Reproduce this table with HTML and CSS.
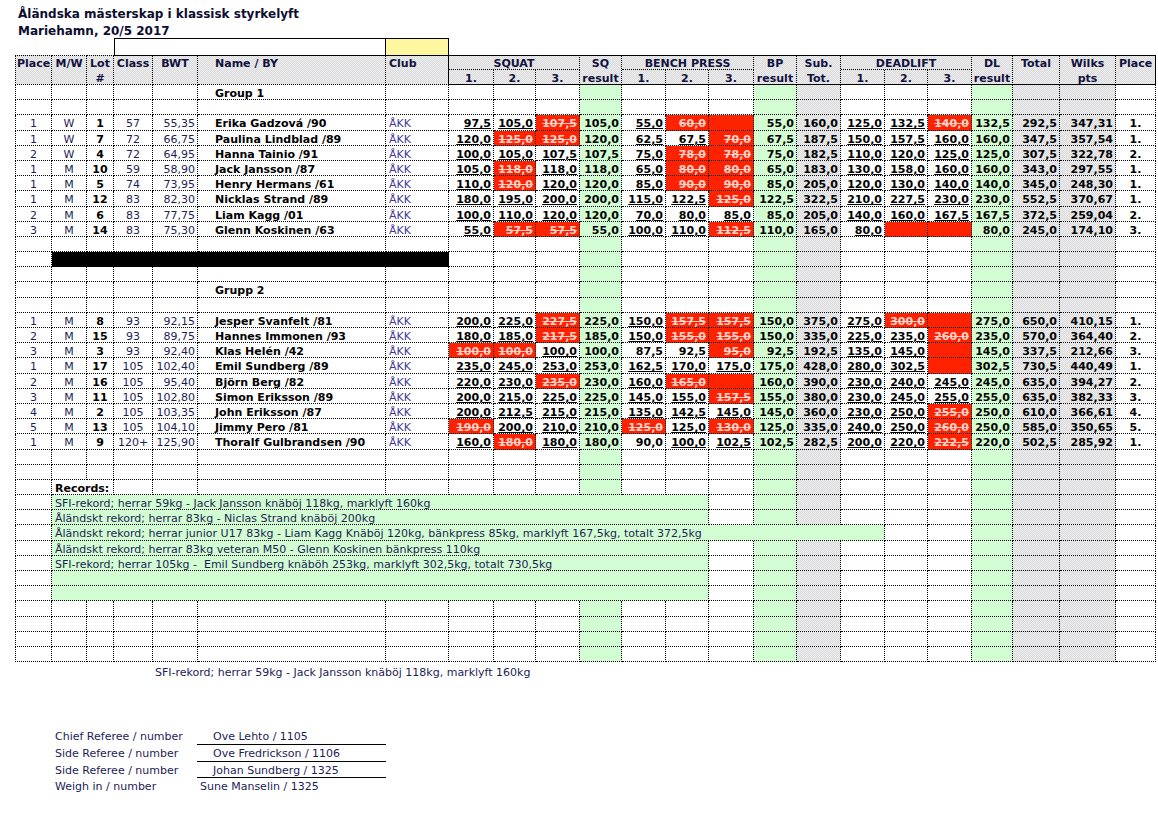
FILE: index.html
```html
<!DOCTYPE html>
<html lang="sv">
<head>
<meta charset="utf-8">
<title>Åländska mästerskap i klassisk styrkelyft</title>
<link rel="stylesheet" href="styles.css">
</head>
<body>
<div class="title">Åländska mästerskap i klassisk styrkelyft<br>Mariehamn, 20/5 2017</div>
<div class="sheet">
  <div class="boxrow"><div class="sp"></div><div class="box"></div><div class="yel"></div></div>
  <div class="head">
    <div class="h2 lf dt first">Place</div>
    <div class="h2 lf dt">M/W</div>
    <div class="h2 lf dt">Lot<br>#</div>
    <div class="h2 lf">Class</div>
    <div class="h2 lf">BWT</div>
    <div class="h2 lf nm">Name / BY</div>
    <div class="h2 lf club">Club</div>
    <div class="h3">SQUAT</div>
    <div class="h2">SQ<br>result</div>
    <div class="h3">BENCH PRESS</div>
    <div class="h2">BP<br>result</div>
    <div class="h2">Sub.<br>Tot.</div>
    <div class="h3">DEADLIFT</div>
    <div class="h2">DL<br>result</div>
    <div class="h2">Total</div>
    <div class="h2">Wilks<br>pts</div>
    <div class="h2 end">Place</div>
    <div class="h1">1.</div><div class="h1">2.</div><div class="h1">3.</div>
    <div class="h1">1.</div><div class="h1">2.</div><div class="h1">3.</div>
    <div class="h1">1.</div><div class="h1">2.</div><div class="h1">3.</div>
  </div>

  <div class="row r"><span></span><span></span><span></span><span></span><span></span><span>Group 1</span><span></span><span></span><span></span><span></span><span></span><span></span><span></span><span></span><span></span><span></span><span></span><span></span><span></span><span></span><span></span><span></span><span></span></div>
  <div class="row r"><span></span><span></span><span></span><span></span><span></span><span></span><span></span><span></span><span></span><span></span><span></span><span></span><span></span><span></span><span></span><span></span><span></span><span></span><span></span><span></span><span></span><span></span><span></span></div>

  <div class="row r"><span>1</span><span>W</span><span>1</span><span>57</span><span>55,35</span><span>Erika Gadzová /90</span><span>ÅKK</span><span class="u">97,5</span><span class="u">105,0</span><span class="x">107,5</span><span>105,0</span><span class="u">55,0</span><span class="x">60,0</span><span class="x"></span><span>55,0</span><span>160,0</span><span class="u">125,0</span><span class="u">132,5</span><span class="x">140,0</span><span>132,5</span><span>292,5</span><span>347,31</span><span>1.</span></div>
  <div class="row r"><span>1</span><span>W</span><span>7</span><span>72</span><span>66,75</span><span>Paulina Lindblad /89</span><span>ÅKK</span><span class="u">120,0</span><span class="x">125,0</span><span class="x">125,0</span><span>120,0</span><span class="u">62,5</span><span class="u">67,5</span><span class="x">70,0</span><span>67,5</span><span>187,5</span><span class="u">150,0</span><span class="u">157,5</span><span class="u">160,0</span><span>160,0</span><span>347,5</span><span>357,54</span><span>1.</span></div>
  <div class="row r"><span>2</span><span>W</span><span>4</span><span>72</span><span>64,95</span><span>Hanna Tainio /91</span><span>ÅKK</span><span class="u">100,0</span><span class="u">105,0</span><span class="u">107,5</span><span>107,5</span><span class="u">75,0</span><span class="x">78,0</span><span class="x">78,0</span><span>75,0</span><span>182,5</span><span class="u">110,0</span><span class="u">120,0</span><span class="u">125,0</span><span>125,0</span><span>307,5</span><span>322,78</span><span>2.</span></div>
  <div class="row r"><span>1</span><span>M</span><span>10</span><span>59</span><span>58,90</span><span>Jack Jansson /87</span><span>ÅKK</span><span class="u">105,0</span><span class="x">118,0</span><span class="u">118,0</span><span>118,0</span><span class="u">65,0</span><span class="x">80,0</span><span class="x">80,0</span><span>65,0</span><span>183,0</span><span class="u">130,0</span><span class="u">158,0</span><span class="u">160,0</span><span>160,0</span><span>343,0</span><span>297,55</span><span>1.</span></div>
  <div class="row r"><span>1</span><span>M</span><span>5</span><span>74</span><span>73,95</span><span>Henry Hermans /61</span><span>ÅKK</span><span class="u">110,0</span><span class="x">120,0</span><span class="u">120,0</span><span>120,0</span><span class="u">85,0</span><span class="x">90,0</span><span class="x">90,0</span><span>85,0</span><span>205,0</span><span class="u">120,0</span><span class="u">130,0</span><span class="u">140,0</span><span>140,0</span><span>345,0</span><span>248,30</span><span>1.</span></div>
  <div class="row r"><span>1</span><span>M</span><span>12</span><span>83</span><span>82,30</span><span>Nicklas Strand /89</span><span>ÅKK</span><span class="u">180,0</span><span class="u">195,0</span><span class="u">200,0</span><span>200,0</span><span class="u">115,0</span><span class="u">122,5</span><span class="x">125,0</span><span>122,5</span><span>322,5</span><span class="u">210,0</span><span class="u">227,5</span><span class="u">230,0</span><span>230,0</span><span>552,5</span><span>370,67</span><span>1.</span></div>
  <div class="row r"><span>2</span><span>M</span><span>6</span><span>83</span><span>77,75</span><span>Liam Kagg /01</span><span>ÅKK</span><span class="u">100,0</span><span class="u">110,0</span><span class="u">120,0</span><span>120,0</span><span class="u">70,0</span><span class="u">80,0</span><span class="u">85,0</span><span>85,0</span><span>205,0</span><span class="u">140,0</span><span class="u">160,0</span><span class="u">167,5</span><span>167,5</span><span>372,5</span><span>259,04</span><span>2.</span></div>
  <div class="row r"><span>3</span><span>M</span><span>14</span><span>83</span><span>75,30</span><span>Glenn Koskinen /63</span><span>ÅKK</span><span class="u">55,0</span><span class="x">57,5</span><span class="x">57,5</span><span>55,0</span><span class="u">100,0</span><span class="u">110,0</span><span class="x">112,5</span><span>110,0</span><span>165,0</span><span class="u">80,0</span><span class="x"></span><span class="x"></span><span>80,0</span><span>245,0</span><span>174,10</span><span>3.</span></div>

  <div class="row r"><span></span><span></span><span></span><span></span><span></span><span></span><span></span><span></span><span></span><span></span><span></span><span></span><span></span><span></span><span></span><span></span><span></span><span></span><span></span><span></span><span></span><span></span><span></span></div>
  <div class="row"><span></span><span class="blk"></span><span></span><span></span><span></span><span class="g"></span><span></span><span></span><span></span><span class="g"></span><span class="k"></span><span></span><span></span><span></span><span class="g"></span><span class="k"></span><span class="k"></span><span></span></div>
  <div class="row r"><span></span><span></span><span></span><span></span><span></span><span></span><span></span><span></span><span></span><span></span><span></span><span></span><span></span><span></span><span></span><span></span><span></span><span></span><span></span><span></span><span></span><span></span><span></span></div>
  <div class="row r"><span></span><span></span><span></span><span></span><span></span><span>Grupp 2</span><span></span><span></span><span></span><span></span><span></span><span></span><span></span><span></span><span></span><span></span><span></span><span></span><span></span><span></span><span></span><span></span><span></span></div>
  <div class="row r"><span></span><span></span><span></span><span></span><span></span><span></span><span></span><span></span><span></span><span></span><span></span><span></span><span></span><span></span><span></span><span></span><span></span><span></span><span></span><span></span><span></span><span></span><span></span></div>

  <div class="row r"><span>1</span><span>M</span><span>8</span><span>93</span><span>92,15</span><span>Jesper Svanfelt /81</span><span>ÅKK</span><span class="u">200,0</span><span class="u">225,0</span><span class="x">227,5</span><span>225,0</span><span class="u">150,0</span><span class="x">157,5</span><span class="x">157,5</span><span>150,0</span><span>375,0</span><span class="u">275,0</span><span class="x">300,0</span><span class="x"></span><span>275,0</span><span>650,0</span><span>410,15</span><span>1.</span></div>
  <div class="row r"><span>2</span><span>M</span><span>15</span><span>93</span><span>89,75</span><span>Hannes Immonen /93</span><span>ÅKK</span><span class="u">180,0</span><span class="u">185,0</span><span class="x">217,5</span><span>185,0</span><span class="u">150,0</span><span class="x">155,0</span><span class="x">155,0</span><span>150,0</span><span>335,0</span><span class="u">225,0</span><span class="u">235,0</span><span class="x">260,0</span><span>235,0</span><span>570,0</span><span>364,40</span><span>2.</span></div>
  <div class="row r"><span>3</span><span>M</span><span>3</span><span>93</span><span>92,40</span><span>Klas Helén /42</span><span>ÅKK</span><span class="x">100,0</span><span class="x">100,0</span><span class="u">100,0</span><span>100,0</span><span>87,5</span><span>92,5</span><span class="x">95,0</span><span>92,5</span><span>192,5</span><span class="u">135,0</span><span class="u">145,0</span><span class="x"></span><span>145,0</span><span>337,5</span><span>212,66</span><span>3.</span></div>
  <div class="row r"><span>1</span><span>M</span><span>17</span><span>105</span><span>102,40</span><span>Emil Sundberg /89</span><span>ÅKK</span><span class="u">235,0</span><span class="u">245,0</span><span class="u">253,0</span><span>253,0</span><span class="u">162,5</span><span class="u">170,0</span><span class="u">175,0</span><span>175,0</span><span>428,0</span><span class="u">280,0</span><span class="u">302,5</span><span class="x"></span><span>302,5</span><span>730,5</span><span>440,49</span><span>1.</span></div>
  <div class="row r"><span>2</span><span>M</span><span>16</span><span>105</span><span>95,40</span><span>Björn Berg /82</span><span>ÅKK</span><span class="u">220,0</span><span class="u">230,0</span><span class="x">235,0</span><span>230,0</span><span class="u">160,0</span><span class="x">165,0</span><span class="x"></span><span>160,0</span><span>390,0</span><span class="u">230,0</span><span class="u">240,0</span><span class="u">245,0</span><span>245,0</span><span>635,0</span><span>394,27</span><span>2.</span></div>
  <div class="row r"><span>3</span><span>M</span><span>11</span><span>105</span><span>102,80</span><span>Simon Eriksson /89</span><span>ÅKK</span><span class="u">200,0</span><span class="u">215,0</span><span class="u">225,0</span><span>225,0</span><span class="u">145,0</span><span class="u">155,0</span><span class="x">157,5</span><span>155,0</span><span>380,0</span><span class="u">230,0</span><span class="u">245,0</span><span class="u">255,0</span><span>255,0</span><span>635,0</span><span>382,33</span><span>3.</span></div>
  <div class="row r"><span>4</span><span>M</span><span>2</span><span>105</span><span>103,35</span><span>John Eriksson /87</span><span>ÅKK</span><span class="u">200,0</span><span class="u">212,5</span><span class="u">215,0</span><span>215,0</span><span class="u">135,0</span><span class="u">142,5</span><span class="u">145,0</span><span>145,0</span><span>360,0</span><span class="u">230,0</span><span class="u">250,0</span><span class="x">255,0</span><span>250,0</span><span>610,0</span><span>366,61</span><span>4.</span></div>
  <div class="row r"><span>5</span><span>M</span><span>13</span><span>105</span><span>104,10</span><span>Jimmy Pero /81</span><span>ÅKK</span><span class="x">190,0</span><span class="u">200,0</span><span class="u">210,0</span><span>210,0</span><span class="x">125,0</span><span class="u">125,0</span><span class="x">130,0</span><span>125,0</span><span>335,0</span><span class="u">240,0</span><span class="u">250,0</span><span class="x">260,0</span><span>250,0</span><span>585,0</span><span>350,65</span><span>5.</span></div>
  <div class="row r"><span>1</span><span>M</span><span>9</span><span>120+</span><span>125,90</span><span>Thoralf Gulbrandsen /90</span><span>ÅKK</span><span class="u">160,0</span><span class="x">180,0</span><span class="u">180,0</span><span>180,0</span><span>90,0</span><span class="u">100,0</span><span class="u">102,5</span><span>102,5</span><span>282,5</span><span class="u">200,0</span><span class="u">220,0</span><span class="x">222,5</span><span>220,0</span><span>502,5</span><span>285,92</span><span>1.</span></div>

  <div class="row r"><span></span><span></span><span></span><span></span><span></span><span></span><span></span><span></span><span></span><span></span><span></span><span></span><span></span><span></span><span></span><span></span><span></span><span></span><span></span><span></span><span></span><span></span><span></span></div>
  <div class="row r"><span></span><span></span><span></span><span></span><span></span><span></span><span></span><span></span><span></span><span></span><span></span><span></span><span></span><span></span><span></span><span></span><span></span><span></span><span></span><span></span><span></span><span></span><span></span></div>

  <div class="row"><span></span><span class="lab">Records:</span><span></span><span></span><span></span><span></span><span></span><span></span><span></span><span class="g"></span><span></span><span></span><span></span><span class="g"></span><span class="k"></span><span></span><span></span><span></span><span class="g"></span><span class="k"></span><span class="k"></span><span></span></div>
  <div class="row"><span></span><span class="rec g">SFI-rekord; herrar 59kg - Jack Jansson knäböj 118kg, marklyft 160kg</span><span></span><span class="g"></span><span class="k"></span><span></span><span></span><span></span><span class="g"></span><span class="k"></span><span class="k"></span><span></span></div>
  <div class="row"><span></span><span class="rec g">Åländskt rekord; herrar 83kg - Niclas Strand knäböj 200kg</span><span></span><span class="g"></span><span class="k"></span><span></span><span></span><span></span><span class="g"></span><span class="k"></span><span class="k"></span><span></span></div>
  <div class="row"><span></span><span class="rec jr g">Åländskt rekord; herrar junior U17 83kg - Liam Kagg Knäböj 120kg, bänkpress 85kg, marklyft 167,5kg, totalt 372,5kg</span><span></span><span></span><span class="g"></span><span class="k"></span><span class="k"></span><span></span></div>
  <div class="row"><span></span><span class="rec g">Åländskt rekord; herrar 83kg veteran M50 - Glenn Koskinen bänkpress 110kg</span><span></span><span class="g"></span><span class="k"></span><span></span><span></span><span></span><span class="g"></span><span class="k"></span><span class="k"></span><span></span></div>
  <div class="row"><span></span><span class="rec g">SFI-rekord; herrar 105kg -  Emil Sundberg knäböh 253kg, marklyft 302,5kg, totalt 730,5kg</span><span></span><span class="g"></span><span class="k"></span><span></span><span></span><span></span><span class="g"></span><span class="k"></span><span class="k"></span><span></span></div>
  <div class="row"><span></span><span class="rec g"></span><span></span><span class="g"></span><span class="k"></span><span></span><span></span><span></span><span class="g"></span><span class="k"></span><span class="k"></span><span></span></div>
  <div class="row"><span></span><span class="rec g"></span><span></span><span class="g"></span><span class="k"></span><span></span><span></span><span></span><span class="g"></span><span class="k"></span><span class="k"></span><span></span></div>

  <div class="row r"><span></span><span></span><span></span><span></span><span></span><span></span><span></span><span></span><span></span><span></span><span></span><span></span><span></span><span></span><span></span><span></span><span></span><span></span><span></span><span></span><span></span><span></span><span></span></div>
  <div class="row r"><span></span><span></span><span></span><span></span><span></span><span></span><span></span><span></span><span></span><span></span><span></span><span></span><span></span><span></span><span></span><span></span><span></span><span></span><span></span><span></span><span></span><span></span><span></span></div>
  <div class="row r"><span></span><span></span><span></span><span></span><span></span><span></span><span></span><span></span><span></span><span></span><span></span><span></span><span></span><span></span><span></span><span></span><span></span><span></span><span></span><span></span><span></span><span></span><span></span></div>
  <div class="row r"><span></span><span></span><span></span><span></span><span></span><span></span><span></span><span></span><span></span><span></span><span></span><span></span><span></span><span></span><span></span><span></span><span></span><span></span><span></span><span></span><span></span><span></span><span></span></div>
</div>

<div class="note">SFI-rekord; herrar 59kg - Jack Jansson knäböj 118kg, marklyft 160kg</div>

<div class="refs">
  <div>Chief Referee / number</div><div class="val">Ove Lehto / 1105</div>
  <div>Side Referee / number</div><div class="val">Ove Fredrickson / 1106</div>
  <div>Side Referee / number</div><div class="val">Johan Sundberg / 1325</div>
  <div>Weigh in / number</div><div class="val last">Sune Manselin / 1325</div>
</div>
</body>
</html>
```

FILE: styles.css
```css
* { box-sizing: border-box; margin: 0; padding: 0; }

body {
  margin: 0;
  width: 1158px;
  height: 817px;
  overflow: hidden;
  background: #fff;
  font-family: "DejaVu Sans", Verdana, sans-serif;
  font-size: 11px;
  color: #1d1d55;
}

.title {
  height: 38px;
  padding: 6px 0 0 18px;
  font-size: 12px;
  font-weight: bold;
  line-height: 17px;
  color: #0d0d30;
  overflow: hidden;
}

.sheet {
  margin-left: 15px;
  width: 1141px;
}

.boxrow, .head, .row {
  display: grid;
  grid-template-columns: 37px 35px 27px 39px 45px 188px 63px 45px 42px 44px 42px 44px 43px 45px 43px 44px 44px 43px 44px 41px 47px 56px 40px;
}

.boxrow { height: 17px; }
.sp { grid-column: span 3; }
.box {
  grid-column: span 3;
  border: 1px solid #000;
  border-bottom: 0;
}
.yel {
  background: #fff7a0;
  border-top: 1px solid #000;
  border-right: 1px solid #000;
}

.head, .row > .k, .r > :nth-child(16), .r > :nth-child(21), .r > :nth-child(22) {
  background-color: #e3e3e3;
  background-image: repeating-conic-gradient(#d9d9dc 0% 25%, #eeeeee 0% 50%);
  background-size: 2px 2px;
}

.head {
  grid-template-rows: 15px 15px;
  font-weight: bold;
  color: #111140;
  text-align: center;
  line-height: 15px;
}
.head > div {
  border-right: 1px dotted #000;
  overflow: hidden;
  white-space: nowrap;
}
.h2 {
  grid-row: span 2;
  border-top: 1px solid #000;
  border-bottom: 1px solid #000;
}
.h2.lf { border-bottom: 1px dotted #000; }
.h2.dt { border-top: 1px dotted #000; }
.h3 {
  grid-column: span 3;
  border-top: 1px solid #000;
  border-bottom: 1px dotted #000;
}
.h1 {
  padding-top: 1px;
  border-bottom: 1px solid #000;
}
.head > .first { border-left: 1px dotted #000; }
.head > .nm { text-align: left; padding-left: 17px; }
.head > .club { text-align: left; padding-left: 3px; border-right: 1px solid #000; }
.head > .end { border-right: 1px solid #000; }

.row { grid-auto-rows: 15.2px; }
.row > span {
  border-right: 1px dotted #000;
  border-bottom: 1px dotted #000;
  padding: 0 2px;
  line-height: 17px;
  white-space: nowrap;
  overflow: hidden;
}
.row > span:first-child { border-left: 1px dotted #000; }

.r > :nth-child(1), .r > :nth-child(2), .r > :nth-child(4) { text-align: center; }
.r > :nth-child(3) { text-align: center; font-weight: bold; color: #000; }
.r > :nth-child(5) { text-align: right; }
.r > :nth-child(6) { font-weight: bold; padding-left: 17px; color: #000; }
.r > :nth-child(7) { color: #3f3a96; padding-left: 3px; }
.r > :nth-child(n+8) { font-weight: bold; text-align: right; color: #000; }
.r > :nth-child(23) { text-align: center; }

.r > :nth-child(11), .r > :nth-child(15), .r > :nth-child(20), .row > .g {
  background: #d2fcd2;
}

.u { text-decoration: underline; }
.r > .x {
  background: #ff2200;
  color: #ffd2ca;
  text-decoration: line-through;
}

.row > .blk { grid-column: span 6; background: #000; }
.row > .lab {
  grid-column: span 2;
  font-weight: bold;
  padding-left: 3px;
  color: #000;
}
.row > .rec {
  grid-column: span 12;
  padding-left: 3px;
  white-space: pre;
}
.row > .rec.jr { grid-column: span 16; }

.note {
  margin-top: 2px;
  padding-left: 155px;
  line-height: 18px;
}

.refs {
  display: grid;
  grid-template-columns: 142px 189px;
  grid-auto-rows: 16.7px;
  margin: 46px 0 0 55px;
  width: 331px;
  line-height: 18px;
}
.refs > div { overflow: hidden; white-space: nowrap; }
.refs > .val {
  padding-left: 16px;
  border-bottom: 1px solid #000;
}
.refs > .val.last {
  padding-left: 3px;
  border-bottom: 0;
}
```
